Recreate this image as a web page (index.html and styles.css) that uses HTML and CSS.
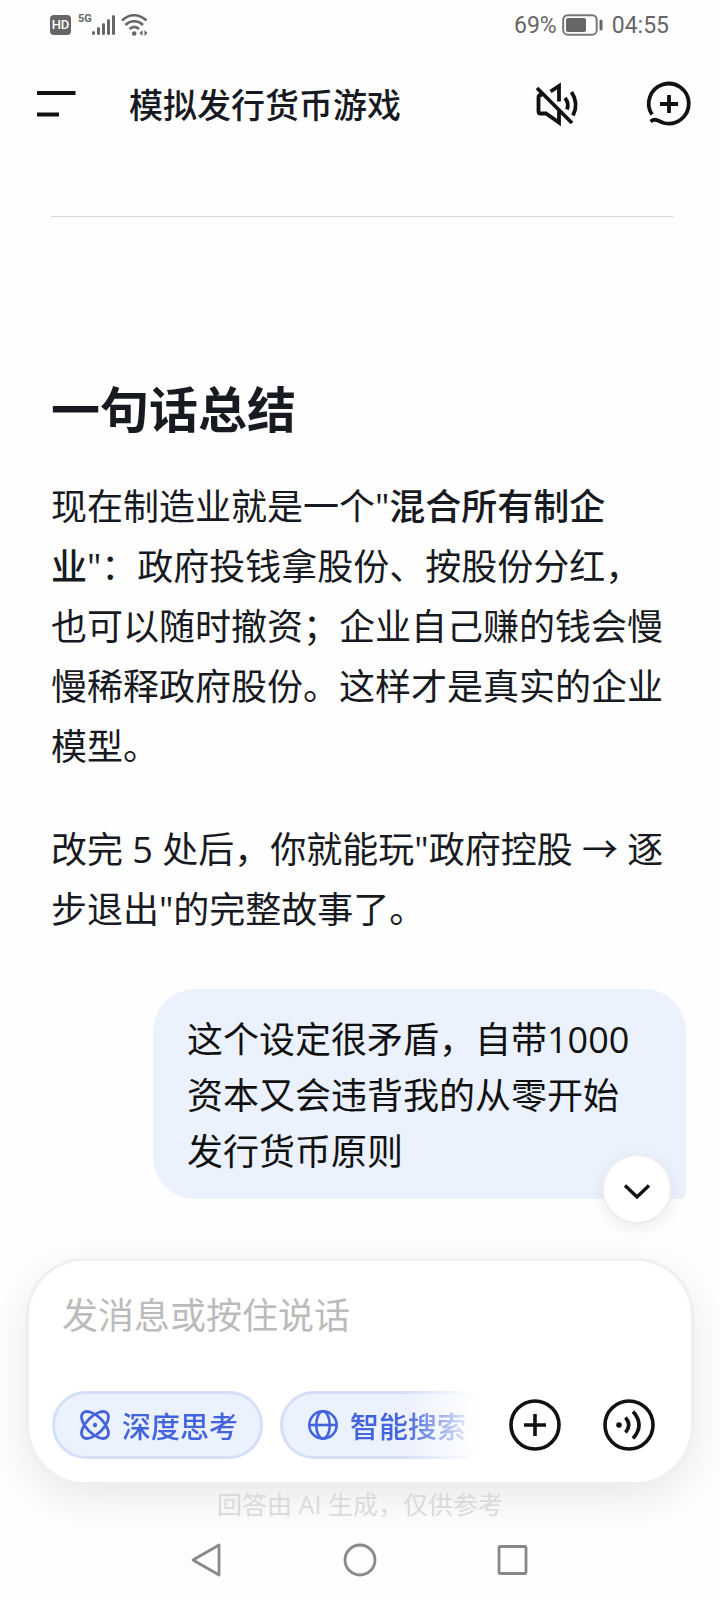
FILE: index.html
```html
<!DOCTYPE html>
<html lang="zh-CN">
<head>
  <meta charset="UTF-8">
  <meta name="viewport" content="width=device-width, initial-scale=1.0">
  <title>模拟发行货币游戏</title>
  <link rel="stylesheet" href="styles.css">
</head>
<body>
  <div class="status-bar">
    <div class="status-left">
      <span class="hd">HD</span>
      <span class="network">5G</span>
      <svg class="signal" width="24" height="22" viewBox="0 0 24 22" stroke="#666" stroke-width="3" stroke-linecap="round" aria-hidden="true">
        <path d="M1.500 19.500v-1M6.500 19.500v-5M11.500 19.500v-9M16.500 19.500v-13M21.500 19.500v-17"/>
      </svg>
      <svg class="wifi" width="28" height="24" viewBox="0 0 28 24" fill="none" stroke="#666" stroke-width="2.600" aria-hidden="true">
        <path d="M1 7.500C8 .5 18 .5 25.500 7.500M4.500 12c5-5 12.500-5 17.500 0M8.500 16c3-2.700 6.500-2.700 9.500 0"/>
        <circle cx="13.200" cy="20.500" r="2.300" fill="#666" stroke="none"/>
        <path d="M21.500 17v6l-3-3zM23.500 17v6l3-3z" fill="#666" stroke="none"/>
      </svg>
    </div>
    <div class="status-right">
      <span>69%</span>
      <svg class="battery" width="41" height="22" viewBox="0 0 41 22" fill="none" aria-hidden="true">
        <rect x="1.200" y="1.200" width="33.500" height="19.500" rx="4.500" stroke="#777" stroke-width="2"/>
        <rect x="4" y="4" width="20" height="14" rx="2" fill="#666"/>
        <rect x="37.500" y="5.500" width="3" height="11" rx="1.500" fill="#666"/>
      </svg>
      <span>04:55</span>
    </div>
  </div>

  <header class="header">
    <button class="icon-btn" type="button" aria-label="菜单">
      <svg width="40" height="28" viewBox="0 0 40 28" stroke="#111" stroke-width="4">
        <path d="M0 3h38.500M0 24.500h22"/>
      </svg>
    </button>
    <h1 class="title">模拟发行货币游戏</h1>
    <button class="icon-btn" type="button" aria-label="静音">
      <svg width="44" height="44" viewBox="0 0 44 44" fill="none" stroke="#111" stroke-width="3.800">
        <path d="M2 6l35 35"/>
        <path d="M7 13H5.500q-2 0-2 2v14.500q0 2 2 2H11l13 9V29"/>
        <path d="M15.500 9.500L24 4v15.500"/>
        <path d="M30 16c3 3.500 3.500 7.500 2 11.500M36.500 10c5 7.500 5.500 15.500 1.500 23.500"/>
      </svg>
    </button>
    <button class="icon-btn new-chat" type="button" aria-label="新对话">
      <svg width="46" height="46" viewBox="0 0 46 46" fill="none" stroke="#111" stroke-width="3.800">
        <path d="M6 33.500A20 20 0 1 1 18 42C13 40.500 10 36.500 4.500 40.500"/>
        <path d="M23 14v18M14 23h18"/>
      </svg>
    </button>
  </header>

  <main class="chat">
    <div class="answer">
      <hr>
      <h2>一句话总结</h2>
      <p>现在制造业就是一个"<strong>混合所有制企业</strong>"：政府投钱拿股份、按股份分红，也可以随时撤资；企业自己赚的钱会慢慢稀释政府股份。这样才是真实的企业模型。</p>
      <p>改完 5 处后，你就能玩"政府控股 → 逐步退出"的完整故事了。</p>
    </div>
    <div class="bubble">这个设定很矛盾，自带1000资本又会违背我的从零开始发行货币原则</div>
    <button class="scroll-down" type="button" aria-label="回到底部">
      <svg width="28" height="18" viewBox="0 0 28 18" fill="none" stroke="#111" stroke-width="3.400">
        <path d="M2 5.500l12 11.500 12-11.500"/>
      </svg>
    </button>
  </main>

  <footer class="footer">
    <form class="composer">
      <input class="message" type="text" placeholder="发消息或按住说话" aria-label="发消息或按住说话">
      <div class="tools">
        <div class="chips">
          <button class="chip" type="button">
            <svg width="30" height="30" viewBox="0 0 30 30" fill="none" stroke="#4364dc" stroke-width="2.800">
              <ellipse cx="15" cy="15" rx="17" ry="8.500" transform="rotate(45 15 15)"/>
              <ellipse cx="15" cy="15" rx="17" ry="8.500" transform="rotate(-45 15 15)"/>
              <circle cx="15" cy="15" r="2.200" fill="#4364dc" stroke="none"/>
            </svg>
            深度思考
          </button>
          <button class="chip" type="button">
            <svg width="30" height="30" viewBox="0 0 30 30" fill="none" stroke="#4364dc" stroke-width="2.600">
              <circle cx="15" cy="15" r="13.700"/>
              <ellipse cx="15" cy="15" rx="6.800" ry="13.700"/>
              <path d="M1.500 15h27"/>
            </svg>
            智能搜索
          </button>
        </div>
        <button class="icon-btn" type="button" aria-label="添加">
          <svg width="52" height="52" viewBox="0 0 52 52" fill="none" stroke="#111" stroke-width="3.600">
            <circle cx="26" cy="26" r="24"/>
            <path d="M26 15v22M15 26h22"/>
          </svg>
        </button>
        <button class="icon-btn voice" type="button" aria-label="语音通话">
          <svg width="52" height="52" viewBox="0 0 52 52" fill="none" stroke="#111" stroke-width="3.600">
            <circle cx="26" cy="26" r="24"/>
            <circle cx="16" cy="26" r="2.800" fill="#111" stroke="none"/>
            <path d="M22.500 18.500q6.500 7.500 0 15M30 12.500q12 13.500 0 27"/>
          </svg>
        </button>
      </div>
    </form>
    <p class="disclaimer">回答由 AI 生成，仅供参考</p>
  </footer>

  <nav class="system-nav">
    <button class="icon-btn" type="button" aria-label="返回">
      <svg width="34" height="34" viewBox="0 0 34 34" fill="none" stroke="#888" stroke-width="2.800" stroke-linejoin="round">
        <path d="M29 2v30L3 17z"/>
      </svg>
    </button>
    <button class="icon-btn" type="button" aria-label="主页">
      <svg width="34" height="34" viewBox="0 0 34 34" fill="none" stroke="#888" stroke-width="2.800">
        <circle cx="17" cy="17" r="15"/>
      </svg>
    </button>
    <button class="icon-btn" type="button" aria-label="最近任务">
      <svg width="34" height="34" viewBox="0 0 34 34" fill="none" stroke="#888" stroke-width="2.800">
        <rect x="3" y="3.500" width="27" height="27" rx="1"/>
      </svg>
    </button>
  </nav>
</body>
</html>
```

FILE: styles.css
```css
* {
  box-sizing: border-box;
}
body {
  margin: 0;
  min-height: 100vh;
  display: flex;
  flex-direction: column;
  background: #fefefe;
  color: #181a22;
  font-family: "Open Sans", "Noto Sans CJK SC", sans-serif;
}
button, input {
  font-family: inherit;
  border: none;
  background: none;
  padding: 0;
}
button {
  cursor: pointer;
}
svg {
  display: block;
  flex: none;
  overflow: visible;
}

/* status bar */
.status-bar {
  display: flex;
  justify-content: space-between;
  align-items: center;
  height: 50px;
  padding: 0 51px 0 50px;
  color: #666;
  font-family: Roboto, sans-serif;
  font-size: 23px;
}
.status-left, .status-right {
  display: flex;
  align-items: center;
}
.hd {
  width: 21px;
  line-height: 20px;
  border-radius: 4px;
  background: #666;
  color: #fff;
  font-size: 13px;
  font-weight: 500;
  text-align: center;
}
.network {
  align-self: flex-start;
  margin-left: 7px;
  font-size: 11px;
  font-weight: 700;
  line-height: 12px;
}
.wifi {
  margin-left: 5px;
}
.battery {
  margin: 0 9px 0 5px;
}

/* header */
.header {
  display: flex;
  align-items: center;
  height: 108px;
  padding: 0 28px 0 37px;
}
.title {
  flex: 1;
  margin: 0 0 0 52px;
  padding-top: 2px;
  font-size: 34px;
  font-weight: 500;
  line-height: 48px;
}
.new-chat {
  margin-left: 67px;
}

/* conversation */
.chat {
  flex: 1;
  position: relative;
  padding: 58px 34px 0 51px;
}
.answer {
  padding-right: 13px;
  font-size: 36px;
  line-height: 60px;
}
.answer hr {
  height: 1px;
  margin: 0 0 156px;
  border: none;
  background: #d6d6d8;
}
.answer h2 {
  margin: 0 0 32px;
  font-size: 49px;
  font-weight: 700;
  line-height: 72px;
}
.answer p {
  margin: 0 0 43px;
}
.answer strong {
  font-weight: 500;
}
.bubble {
  max-width: 533px;
  margin: 49px 0 0 auto;
  padding: 23px 34px 19px;
  border-radius: 42px 42px 6px 42px;
  background: #ebf1fd;
  color: #111;
  font-size: 36px;
  line-height: 56px;
}
.scroll-down {
  position: absolute;
  right: 48px;
  bottom: 34px;
  display: flex;
  align-items: center;
  justify-content: center;
  width: 70px;
  height: 70px;
  border: 2px solid #eee;
  border-radius: 50%;
  background: #fff;
  background-clip: padding-box;
  box-shadow: 0 4px 16px rgba(0, 0, 0, 0.08);
}

/* composer */
.footer {
  padding: 0 26px;
}
.composer {
  padding: 24px 36px 23px 23px;
  border: 3px solid #f0f0f0;
  border-bottom-width: 1px;
  border-radius: 58px;
  background: #fff;
  box-shadow: 0 14px 44px rgba(0, 0, 0, 0.09);
}
.message {
  display: block;
  width: 100%;
  height: 60px;
  padding-left: 10px;
  font-size: 36px;
  outline: none;
}
.message::placeholder {
  color: #bbb;
  opacity: 1;
}
.tools {
  display: flex;
  align-items: center;
  margin-top: 46px;
}
.chips {
  flex: 1;
  min-width: 0;
  display: flex;
  gap: 17px;
  margin-right: 30px;
  overflow: hidden;
  -webkit-mask-image: linear-gradient(to right, #000 calc(100% - 75px), transparent);
  mask-image: linear-gradient(to right, #000 calc(100% - 75px), transparent);
}
.chip {
  flex: none;
  display: flex;
  align-items: center;
  gap: 12px;
  height: 68px;
  padding: 0 22px 0 25px;
  border: 3px solid #d3e0f6;
  border-radius: 34px;
  background: #ebf1fd;
  color: #4364dc;
  font-size: 29px;
  font-weight: 500;
}
.voice {
  margin-left: 42px;
}
.disclaimer {
  position: relative;
  margin: 1px 0 0;
  color: #dadada;
  font-size: 25px;
  line-height: 40px;
  text-align: center;
}

.system-nav {
  display: flex;
  justify-content: center;
  align-items: center;
  gap: 119px;
  height: 76px;
  padding-bottom: 4px;
}
```
